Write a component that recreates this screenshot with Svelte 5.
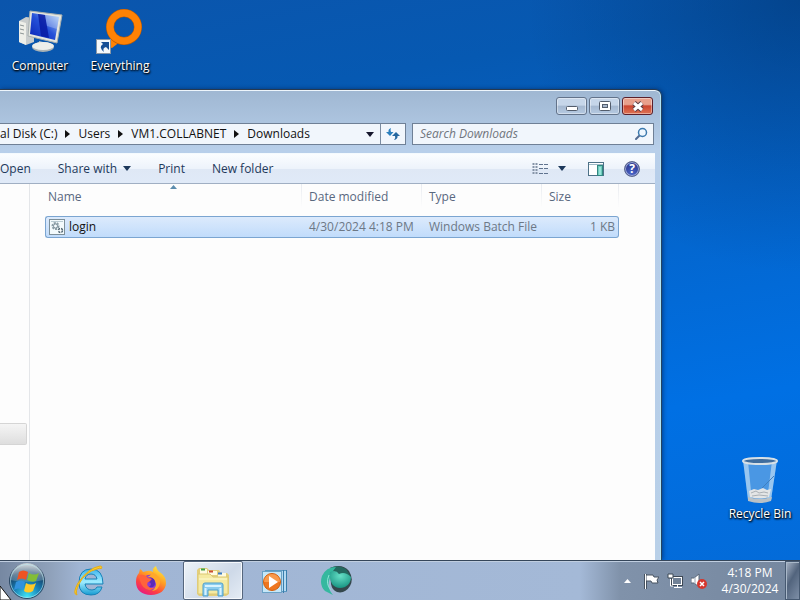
<script>
    let search = "";
    let selected = "login";

    const crumbs = ["Users", "VM1.COLLABNET", "Downloads"];

    const files = [
        {
            name: "login",
            modified: "4/30/2024 4:18 PM",
            type: "Windows Batch File",
            size: "1 KB",
        },
    ];
</script>

<div class="screen">
    <main class="desktop">
        <!-- Desktop icons -->
        <button class="shortcut computer">
            <svg width="48" height="48" viewBox="0 0 48 48" aria-hidden="true">
                <defs>
                    <linearGradient id="monitor" x1="0" y1="1" x2="1" y2="0">
                        <stop offset="0" stop-color="#0822b5" />
                        <stop offset="0.5" stop-color="#2450d8" />
                        <stop offset="1" stop-color="#b4d8fa" />
                    </linearGradient>
                </defs>
                <path d="M3 13l7-4 8 1v24l-8 3-7-3z" fill="#c9cdcd" />
                <path d="M3 13l7 2v22l-7-3z" fill="#eeefe9" />
                <path d="M4 17l4 1M4 21l4 1M4 25l4 1" stroke="#8c9494" />
                <path d="M23 33l8 2v6h-8z" fill="#b8bfc2" />
                <ellipse cx="27" cy="39" rx="11" ry="5" fill="#a9b2b5" />
                <ellipse cx="27" cy="38" rx="11" ry="4" fill="#eceeea" />
                <path d="M14 3l32 4-5 28-29-7z" fill="#e4e6e0" stroke="#a7afae" />
                <path d="M16 5l27 4-4 23-25-6z" fill="url(#monitor)" />
                <path d="M22 6l7 1 4 23-8-2z" fill="#0618a0" opacity="0.8" />
                <path d="M29 7l14 2-2 12-10-3z" fill="#fff" opacity="0.25" />
            </svg>
            <span>Computer</span>
        </button>

        <button class="shortcut everything">
            <svg width="48" height="48" viewBox="0 0 48 48" aria-hidden="true">
                <path d="M16 28l-6 10 6 2 9-7z" fill="#ff8204" />
                <circle cx="28" cy="19" r="14" fill="none" stroke="#b75a08" stroke-width="8" />
                <circle cx="28" cy="19" r="14" fill="none" stroke="#ff8204" stroke-width="7" />
                <rect x="0.5" y="31.5" width="14" height="14" fill="#f4f8fb" stroke="#8996a5" />
                <path d="M5 34h8v8l-3-3q-4 1-2 5-6-5-1-8z" fill="#164f96" />
            </svg>
            <span>Everything</span>
        </button>

        <button class="shortcut recycle">
            <svg width="48" height="48" viewBox="0 0 48 48" aria-hidden="true">
                <path d="M7 4l5 40q11 5 23 0l6-40z" fill="#86b9e8" opacity="0.55" />
                <path d="M7 4l5 40 4 1-4-40zM41 4l-6 40-4 1 5-40z" fill="#d9ecfa" opacity="0.55" />
                <path d="M13 35l5-2 4 1 5-2 4 2 4-1-2 8q-9 3-19 0z" fill="#e3e5e6" />
                <path d="M15 37l5-2 3 2 5-1 4 1M16 40l7-1 9 1" stroke="#aab0b5" fill="none" />
                <path d="M12 41q12 4 24 0l-1 4q-11 4-23 0z" fill="#b9c1c6" />
                <path d="M38 20L26 32" stroke="#3f7fc0" />
                <ellipse cx="24" cy="5" rx="17" ry="3" fill="#3f6d9e" stroke="#d7e0e6" stroke-width="2" />
            </svg>
            <span>Recycle Bin</span>
        </button>

        <!-- Explorer window -->
        <section class="window" aria-label="Downloads">
            <header class="titlebar">
                <button class="caption" aria-label="Minimize">
                    <svg width="28" height="15" viewBox="0 0 28 15">
                        <rect x="8.5" y="7.5" width="11" height="4" rx="1" fill="#fff" stroke="#535d6c" />
                    </svg>
                </button>
                <button class="caption" aria-label="Maximize">
                    <svg width="28" height="15" viewBox="0 0 28 15">
                        <rect x="8.5" y="2.5" width="11" height="9" rx="1" fill="#fff" stroke="#535d6c" />
                        <rect x="11.5" y="5.5" width="5" height="3" fill="#a8b8cd" stroke="#535d6c" />
                    </svg>
                </button>
                <button class="caption close" aria-label="Close">
                    <svg width="28" height="15" viewBox="0 0 28 15">
                        <path d="M10 4l8 7M18 4l-8 7" stroke="#593d44" stroke-width="5" />
                        <path d="M10 4l8 7M18 4l-8 7" stroke="#fff" stroke-width="3" />
                    </svg>
                </button>
            </header>

            <div class="location">
                <nav class="address" aria-label="Address">
                    <button class="crumb first">al Disk (C:)</button>
                    {#each crumbs as crumb}
                        <svg class="chevron" width="5" height="8" viewBox="0 0 5 8" aria-hidden="true">
                            <path d="M0 0l5 4-5 4z" fill="#111" />
                        </svg>
                        <button class="crumb">{crumb}</button>
                    {/each}
                    <button class="history" aria-label="Previous locations">
                        <svg width="8" height="5" viewBox="0 0 8 5">
                            <path d="M0 0h8L4 5z" fill="#16162c" />
                        </svg>
                    </button>
                    <button class="refresh" aria-label="Refresh">
                        <svg width="14" height="14" viewBox="0 0 14 14">
                            <path d="M5 1Q2 2 2.500 5H0l4 4 3.500-4H5Q4 3 5 1z" fill="#2b7fbd" />
                            <path d="M8 13q4-1 3.500-4H14l-4-4-4 4h3q1 2-1 4z" fill="#23669f" />
                        </svg>
                    </button>
                </nav>
                <label class="search">
                    <input type="text" placeholder="Search Downloads" aria-label="Search Downloads" bind:value={search} />
                    <svg width="14" height="14" viewBox="0 0 14 14" aria-hidden="true">
                        <path d="M2 12l4-4" stroke="#526b91" stroke-width="2" stroke-linecap="round" />
                        <circle cx="8.5" cy="5.5" r="4" fill="#eef7ff" stroke="#3c79ad" stroke-width="1.5" />
                    </svg>
                </label>
            </div>

            <div class="toolbar">
                <button>Open</button>
                <button>
                    Share with
                    <svg width="8" height="5" viewBox="0 0 8 5" aria-hidden="true">
                        <path d="M0 0h8L4 5z" fill="#1e395b" />
                    </svg>
                </button>
                <button>Print</button>
                <button>New folder</button>
                <div class="tools">
                    <button aria-label="Change your view">
                        <svg width="16" height="14" viewBox="0 0 16 14">
                            <path d="M1.500 1v12M4.500 1v12" stroke="#8795a8" stroke-width="2" stroke-dasharray="2 1" />
                            <path d="M7 2.500h9M7 6.500h9M7 11.500h9" stroke="#5f738f" stroke-dasharray="4 1" />
                        </svg>
                    </button>
                    <button class="more" aria-label="More view options">
                        <svg width="8" height="5" viewBox="0 0 8 5">
                            <path d="M0 0h8L4 5z" fill="#1e395b" />
                        </svg>
                    </button>
                    <button class="preview" aria-label="Show the preview pane">
                        <svg width="16" height="14" viewBox="0 0 16 14">
                            <rect x="0.5" y="0.5" width="15" height="13" fill="#fff" stroke="#4d7187" />
                            <path d="M1 2.500h14" stroke="#9db9c6" />
                            <rect x="9.5" y="3.5" width="5" height="10" fill="#70cabd" stroke="#328780" />
                            <path d="M12 5v8" stroke="#c1fff6" />
                        </svg>
                    </button>
                    <button class="help" aria-label="Get help">?</button>
                </div>
            </div>

            <div class="body">
                <aside class="tree">
                    <div class="tree-item"></div>
                </aside>
                <div class="list">
                    <table>
                        <colgroup>
                            <col class="col-name" />
                            <col class="col-date" />
                            <col class="col-type" />
                            <col class="col-size" />
                        </colgroup>
                        <thead>
                            <tr>
                                <th>
                                    Name
                                    <svg class="sort" width="7" height="4" viewBox="0 0 7 4" aria-hidden="true">
                                        <path d="M0 4l3.500-4L7 4z" fill="#5b8cad" />
                                    </svg>
                                </th>
                                <th>Date modified</th>
                                <th>Type</th>
                                <th>Size</th>
                            </tr>
                        </thead>
                        <tbody>
                            {#each files as file}
                                <tr class={selected === file.name ? "selected" : ""} on:click={() => (selected = file.name)}>
                                    <td>
                                        <div class="file">
                                            <svg width="16" height="16" viewBox="0 0 16 16" aria-hidden="true">
                                                <rect x="0.5" y="0.5" width="15" height="15" fill="#f3fafc" stroke="#7d8f99" />
                                                <path d="M2 2.500h12" stroke="#b9cbd3" />
                                                <circle cx="6.5" cy="7" r="3" fill="#dce8ed" stroke="#8a9ca5" stroke-width="2" stroke-dasharray="2 1" />
                                                <circle cx="6.5" cy="7" r="2" fill="#f6fcff" stroke="#82959f" />
                                                <circle cx="11.5" cy="11.5" r="2" fill="#fff" stroke="#4e6470" stroke-width="1.5" stroke-dasharray="2 1" />
                                            </svg>
                                            {file.name}
                                        </div>
                                    </td>
                                    <td>{file.modified}</td>
                                    <td>{file.type}</td>
                                    <td class="size">{file.size}</td>
                                </tr>
                            {/each}
                        </tbody>
                    </table>
                </div>
            </div>
        </section>
    </main>

    <footer class="taskbar">
        <button class="start" aria-label="Start">
            <svg width="38" height="38" viewBox="0 0 38 38">
                <defs>
                    <radialGradient id="orb" cx="0.5" cy="0.95" r="0.9">
                        <stop offset="0" stop-color="#41e6f5" />
                        <stop offset="0.45" stop-color="#167db4" />
                        <stop offset="0.8" stop-color="#173e62" />
                        <stop offset="1" stop-color="#546b7d" />
                    </radialGradient>
                    <linearGradient id="gloss" x1="0" y1="0" x2="0" y2="1">
                        <stop offset="0" stop-color="#fff" stop-opacity="0.75" />
                        <stop offset="1" stop-color="#b5c7d3" stop-opacity="0.25" />
                    </linearGradient>
                </defs>
                <circle cx="19" cy="19" r="17.5" fill="url(#orb)" stroke="#2d4964" />
                <path d="M2 18a17 17 0 0 1 34 0q-17 4-34 0z" fill="url(#gloss)" />
                <path d="M11 10q4-3 9 0l-2 8q-4-3-9 0z" fill="#ef5422" />
                <path d="M21 11q5 3 10 0l-3 8q-4 2-9-1z" fill="#83bd36" />
                <path d="M8 20q5-3 9 0l-2 8q-5-3-9 0z" fill="#3292dd" />
                <path d="M18 21q5 3 10 0l-3 8q-5 3-9 0z" fill="#ffc928" />
                <circle cx="19" cy="19" r="16.5" fill="none" stroke="#b9e7f1" opacity="0.6" />
            </svg>
        </button>

        <button class="task" aria-label="Internet Explorer">
            <svg width="34" height="34" viewBox="0 0 34 34">
                <defs>
                    <linearGradient id="ie" x1="0" y1="0" x2="0" y2="1">
                        <stop offset="0" stop-color="#3eb4ed" />
                        <stop offset="0.5" stop-color="#a0ecff" />
                        <stop offset="1" stop-color="#159bd2" />
                    </linearGradient>
                </defs>
                <path d="M31 20H13q1 6 7 6 4 0 5-3h5q-2 8-11 8-12 0-12-12Q7 5 19 5q12 0 12 15zM13 15h12q-1-5-6-5t-6 5z" fill="url(#ie)" stroke="#1781b7" fill-rule="evenodd" />
                <path d="M5 31Q0 30 6 19 16 4 28 2q3 0 1 3 0-2-4 0Q13 8 7 20q-4 8-2 11z" fill="#ffce27" stroke="#e3ac1a" />
            </svg>
        </button>

        <button class="task" aria-label="Firefox">
            <svg width="32" height="32" viewBox="0 0 32 32">
                <defs>
                    <linearGradient id="fox" x1="0.8" y1="0" x2="0.2" y2="1">
                        <stop offset="0" stop-color="#fff043" />
                        <stop offset="0.4" stop-color="#ff9b23" />
                        <stop offset="0.7" stop-color="#ff423e" />
                        <stop offset="1" stop-color="#e4148b" />
                    </linearGradient>
                </defs>
                <path d="M21 1q1 5 5 7 5 4 5 10c0 7-6 12-15 12S1 25 1 17q0-6 3-9l1-4q2 1 3 3l4-1q3-1 6 1-1-4 3-6z" fill="url(#fox)" />
                <path d="M9 12q7-5 13 1 4 7-1 11-6 3-11-1-4-5-1-11z" fill="#8a3cd6" />
                <path d="M17 7q9 4 8 11-1 7-8 8 6-5 3-10-3-4-8-4 4-1 5-5z" fill="#ffa82b" />
                <path d="M4 10q6-1 9 3l4 1q0 3-4 3-2 3 1 5 3 2 6 0-3 5-9 2-6-3-7-14z" fill="#ff633b" />
                <path d="M14 12q7 1 6 7-1 4-6 3 4-3 0-5l3-3z" fill="#592bb7" />
            </svg>
        </button>

        <button class="task active" aria-label="Windows Explorer">
            <svg width="34" height="32" viewBox="0 0 34 32">
                <path d="M1 5l2-2h8l2 2h10l2 3h6l2 2v19l-3 2H3l-2-2z" fill="#e3cf7c" />
                <path d="M4 4h7v5H4zM12 6h9v4h-9zM22 8h8v4h-8z" fill="#fffae0" />
                <path d="M5 4.500h4" stroke="#40a248" stroke-width="2" />
                <path d="M13 6.500h4" stroke="#cb4a32" stroke-width="2" />
                <path d="M22 8.500h4" stroke="#3979c3" stroke-width="2" />
                <path d="M2 9h12l3 3h15v17H2z" fill="#f5eaa2" stroke="#dcc875" />
                <path d="M3 14h28" stroke="#fffbd3" />
                <path d="M7 31V20q0-2 2-2h16q2 0 2 2v11h-5v-6H12v6z" fill="#8bccee" stroke="#4f9fcb" />
                <path d="M9 21h16M9.500 23v7M24.500 23v7" stroke="#d8f3ff" stroke-width="2" />
            </svg>
        </button>

        <button class="task" aria-label="Windows Media Player">
            <svg width="28" height="28" viewBox="0 0 28 28">
                <rect x="4.5" y="3.5" width="21" height="21" fill="#b5daf2" stroke="#5b98c0" />
                <rect x="1.5" y="4.5" width="19" height="21" fill="#c5e7f8" stroke="#6ba2c6" />
                <path d="M22.500 3v23M25.500 3v21" stroke="#397eac" />
                <circle cx="11" cy="15" r="8.5" fill="#ee7620" stroke="#d35d0a" />
                <path d="M3 15a8 8 0 0 1 16 0z" fill="#f89a4c" />
                <path d="M8 9l9 6-9 6z" fill="#fff" />
            </svg>
        </button>

        <button class="task" aria-label="Remote control">
            <svg width="34" height="32" viewBox="0 0 34 32">
                <defs>
                    <radialGradient id="sphere" cx="0.5" cy="0.3" r="0.7">
                        <stop offset="0" stop-color="#66dfc6" />
                        <stop offset="1" stop-color="#189482" />
                    </radialGradient>
                </defs>
                <path d="M10 3q12-5 19 3 5 8 1 15-5 8-13 6-5-2-6-8z" fill="#34474c" />
                <path d="M10 3q8-4 16 1l5 8q-6-4-12-3z" fill="#23685f" />
                <path d="M16 2Q6 2 2 11q-3 9 3 15l8 4q-6-7-4-14 2-8 7-14z" fill="#35b89f" />
                <path d="M10 7q6-3 9 2 6-3 12 3 0 7-6 10-8 3-13-3-3-6-2-12z" fill="url(#sphere)" />
                <path d="M9 10q-4 9 2 15" stroke="#8be8d5" fill="none" />
            </svg>
        </button>

        <div class="tray">
            <button class="tray-icon hidden-icons" aria-label="Show hidden icons">
                <svg width="7" height="4" viewBox="0 0 7 4">
                    <path d="M0 4l3.500-4L7 4z" fill="#fff" />
                </svg>
            </button>
            <button class="tray-icon" aria-label="Action Center">
                <svg width="16" height="16" viewBox="0 0 16 16">
                    <path d="M2.500 1v15" stroke="#465260" stroke-width="3" />
                    <path d="M3 2h7l1 2h5l-2 3 1 3h-6l-1-2H3z" fill="#fff" stroke="#465260" />
                    <path d="M2.500 1v15" stroke="#fff" />
                </svg>
            </button>
            <button class="tray-icon" aria-label="Network">
                <svg width="16" height="16" viewBox="0 0 16 16">
                    <rect x="5.5" y="4.5" width="9" height="7" fill="#728398" stroke="#3d4855" stroke-width="3" />
                    <rect x="5.5" y="4.5" width="9" height="7" fill="#728398" stroke="#fff" />
                    <path d="M7 14.500h8M10.500 12v2M3.500 6v7H6" stroke="#fff" fill="none" />
                    <path d="M1 1h5v4H1z" fill="#fff" stroke="#3d4855" />
                </svg>
            </button>
            <button class="tray-icon" aria-label="Volume muted">
                <svg width="16" height="16" viewBox="0 0 16 16">
                    <path d="M0 5h3l5-4v13l-5-4H0z" fill="#fff" stroke="#596779" />
                    <path d="M4 4v7" stroke="#9da8b5" />
                    <circle cx="11" cy="11" r="5" fill="#d5362d" />
                    <path d="M9 9l4 4M13 9l-4 4" stroke="#fff" stroke-width="1.5" />
                </svg>
            </button>
            <button class="clock">
                <span>4:18 PM</span>
                <span>4/30/2024</span>
            </button>
            <button class="show-desktop" aria-label="Show desktop"></button>
        </div>

        <svg class="cursor" width="12" height="14" viewBox="0 0 12 14" aria-hidden="true">
            <path d="M0 0l11 14H0z" fill="#fff" stroke="#111" />
        </svg>
    </footer>
</div>

<style>
    :global(body) {
        margin: 0;
        overflow: hidden;
    }

    .screen {
        display: flex;
        flex-direction: column;
        height: 100vh;
        font-family: "Open Sans", "Noto Sans", sans-serif;
        font-size: 12px;
        line-height: 16px;
        cursor: default;
    }

    button {
        display: flex;
        align-items: center;
        justify-content: center;
        margin: 0;
        padding: 0;
        border: 0;
        background: none;
        color: inherit;
        font: inherit;
        white-space: nowrap;
    }

    svg {
        display: block;
        flex: none;
    }

    .desktop {
        position: relative;
        flex: 1;
        min-height: 0;
        overflow: hidden;
        background:
            radial-gradient(circle at 100% 0, rgba(0, 38, 88, 0.4), transparent 28%),
            linear-gradient(170deg, #0b55ac 0%, #0659b2 20%, #0464ca 45%, #0070e4 75%, #036bd9 100%);
    }

    /* Desktop icons */
    .shortcut {
        position: absolute;
        flex-direction: column;
        width: 76px;
        gap: 2px;
        color: white;
        text-shadow: 1px 1px 2px #000, 0 1px 2px #000;
    }

    .computer {
        top: 8px;
        left: 2px;
    }

    .everything {
        top: 8px;
        left: 82px;
    }

    .recycle {
        right: 2px;
        bottom: 38px;
    }

    /* Explorer window */
    .window {
        position: absolute;
        top: 89px;
        right: 138px;
        bottom: 0;
        left: 0;
        display: flex;
        flex-direction: column;
        box-sizing: border-box;
        padding-right: 6px;
        border-top: 1px solid #27394f;
        border-right: 1px solid #27445f;
        border-radius: 0 7px 0 0;
        background: linear-gradient(#9fb7d2, #b8cfea 60px, #b5cdea 120px, #b9d0e8);
        box-shadow: inset 0 1px #edf5fc, inset -1px 0 #b2e4f5, 1px 0 4px rgba(0, 20, 60, 0.5);
    }

    .titlebar {
        display: flex;
        justify-content: flex-end;
        gap: 2px;
        height: 26px;
        padding: 7px 2px 0 0;
    }

    .caption {
        box-sizing: border-box;
        width: 31px;
        height: 18px;
        border: 1px solid #63738a;
        border-radius: 3px;
        background: linear-gradient(#c6d6e9 0 45%, #a5b8d0 50%, #b5cae2);
        box-shadow: inset 0 0 0 1px rgba(255, 255, 255, 0.4);
    }

    .close {
        border-color: #5b1f2a;
        background: linear-gradient(#e8a08c 0 40%, #cc4630 50%, #dd7354);
    }

    .location {
        display: flex;
        gap: 6px;
        height: 22px;
        padding: 0 1px 8px 0;
    }

    .address,
    .search {
        display: flex;
        align-items: center;
        box-sizing: border-box;
        border: 1px solid #6f8096;
        background: #f1f6fc;
    }

    .address {
        flex: 1;
        min-width: 0;
        border-left: 0;
        color: #111;
    }

    .first {
        justify-content: flex-end;
        min-width: 57px;
    }

    .chevron {
        margin: 0 8px;
    }

    .history {
        width: 20px;
        height: 20px;
        margin-left: auto;
    }

    .refresh {
        width: 25px;
        height: 20px;
        border-left: 1px solid #7b8ca1;
    }

    .search {
        width: 242px;
        padding: 0 5px 0 7px;
    }

    .search input {
        flex: 1;
        min-width: 0;
        padding: 0;
        border: 0;
        outline: 0;
        background: none;
        color: #222;
        font: inherit;
    }

    .search input::placeholder {
        color: #70757d;
        font-style: italic;
        opacity: 1;
    }

    .toolbar {
        display: flex;
        align-items: center;
        box-sizing: border-box;
        gap: 27px;
        height: 31px;
        border-top: 1px solid #f4fafe;
        border-bottom: 1px solid #a0afc3;
        background: linear-gradient(#fbfdff, #edf3fb 50%, #dfe8f5 52%, #e0eaf8);
        color: #1e395b;
    }

    .toolbar button {
        gap: 6px;
    }

    .tools {
        display: flex;
        align-items: center;
        margin-left: auto;
        padding-right: 15px;
    }

    .more {
        margin: 0 22px 0 10px;
    }

    .preview {
        margin-right: 20px;
    }

    .help {
        box-sizing: border-box;
        width: 16px;
        height: 16px;
        border: 1px solid #5b668c;
        border-radius: 50%;
        background: radial-gradient(circle at 50% 80%, #4863c9, #252c7b);
        box-shadow: inset 0 0 0 1px #9aa7d8;
        color: white;
        font-weight: 700;
    }

    .body {
        display: flex;
        flex: 1;
        min-height: 0;
        background: #fdfdfd;
    }

    .tree {
        display: flex;
        flex-direction: column;
        justify-content: flex-end;
        box-sizing: border-box;
        width: 30px;
        padding: 0 2px 115px 0;
        border-right: 1px solid #e4e6e9;
    }

    .tree-item {
        height: 20px;
        border: 1px solid #d5d5d5;
        border-left: 0;
        border-radius: 0 2px 2px 0;
        background: linear-gradient(#f5f5f5, #dedede);
    }

    .list {
        flex: 1;
        padding-left: 15px;
    }

    table {
        width: 574px;
        border-spacing: 0;
        table-layout: fixed;
        color: #6d7886;
    }

    .col-name {
        width: 257px;
    }

    .col-date,
    .col-type {
        width: 120px;
    }

    .col-size {
        width: 77px;
    }

    th {
        position: relative;
        height: 26px;
        padding: 0 0 6px 7px;
        background: linear-gradient(#e8ebf0, #fdfdfd) right top / 1px 24px no-repeat;
        color: #59687f;
        font-weight: 400;
        text-align: left;
    }

    th:first-child {
        padding-left: 3px;
    }

    .sort {
        position: absolute;
        top: 1px;
        right: 0;
        left: 0;
        margin: 0 auto;
    }

    td {
        height: 20px;
        padding: 0 0 0 7px;
        border: solid transparent;
        border-width: 1px 0;
        white-space: nowrap;
    }

    td:first-child {
        padding-left: 3px;
        border-left-width: 1px;
        border-radius: 3px 0 0 3px;
        color: #111;
    }

    td:last-child {
        padding-right: 3px;
        border-right-width: 1px;
        border-radius: 0 3px 3px 0;
    }

    .selected td {
        border-color: #7ba5d1;
        background: linear-gradient(#dceafc, #c1dcfb);
    }

    .file {
        display: flex;
        align-items: center;
        gap: 4px;
    }

    .size {
        text-align: right;
    }

    /* Taskbar */
    .taskbar {
        position: relative;
        display: flex;
        align-items: stretch;
        gap: 2px;
        box-sizing: border-box;
        height: 40px;
        border-top: 1px solid #35465a;
        background: linear-gradient(90deg, #7688a2, #8fa1ba 50px, #a0b5d4 80px, #a4b9d7 calc(100% - 220px), #8092aa calc(100% - 180px), #75879f);
        box-shadow: inset 0 1px #c0cee0;
    }

    .start {
        width: 54px;
        margin-right: 3px;
    }

    .task {
        width: 60px;
    }

    .active {
        box-sizing: border-box;
        border: 1px solid #55667d;
        border-radius: 2px;
        background: linear-gradient(135deg, #edf3f8, #ced9e8 60%, #e5edf5);
        box-shadow: inset 0 0 0 1px #f5f8fc;
    }

    .tray {
        display: flex;
        align-items: center;
        margin-left: auto;
        color: white;
    }

    .tray-icon {
        margin-right: 8px;
    }

    .hidden-icons {
        margin-right: 12px;
    }

    .clock {
        flex-direction: column;
        width: 70px;
    }

    .show-desktop {
        align-self: stretch;
        width: 15px;
        border: 1px solid #465971;
        background: linear-gradient(120deg, #a9b5c6, #52647d 45%, #7e8fa7);
        box-shadow: inset 1px 1px #a9b8c9;
    }

    .cursor {
        position: absolute;
        bottom: 0;
        left: 0;
    }
</style>
